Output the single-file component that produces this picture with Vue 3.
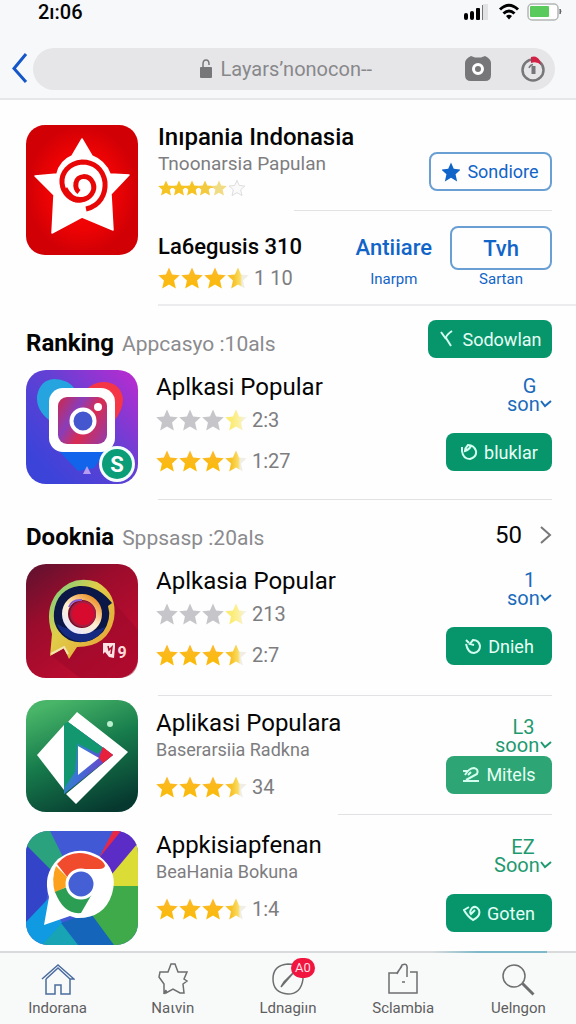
<template>
  <div class="page">
    <header class="top">
      <div class="status">
        <span class="time">2ı:06</span>
        <div class="status-icons">
          <svg width="28" height="20" viewBox="0 0 28 20">
            <rect x="1" y="11" width="4" height="7" rx="2" />
            <rect x="7" y="9" width="4" height="9" rx="2" />
            <rect x="13" y="6" width="4" height="12" rx="1" />
            <rect x="19" y="3" width="1" height="15" fill="#777" />
            <rect x="20" y="2" width="5" height="16" fill="#e2e3e5" />
          </svg>
          <svg width="22" height="18" viewBox="0 0 22 18" fill="none" stroke="#000" stroke-width="3">
            <path d="M2 6.500Q11 -2 20 6.500" />
            <path d="M5.500 10.500Q11 5.500 16.500 10.500" />
            <path d="M11 16.500l-3-3.500q3-2.500 6 0z" fill="#000" stroke="none" />
          </svg>
          <svg width="35" height="18" viewBox="0 0 35 18">
            <rect x="1" y="1" width="30" height="16" rx="4" fill="#fff" stroke="#b3b7b5" stroke-width="1.500" />
            <rect x="3" y="3" width="19" height="11" rx="1" fill="#5aca5c" />
            <path d="M33 6q2 2 0 5z" fill="#666" stroke="#666" />
          </svg>
        </div>
      </div>
      <div class="address">
        <a class="back" href="#" aria-label="Back">
          <svg width="16" height="32" viewBox="0 0 16 32" fill="none" stroke="#1557c9" stroke-width="3">
            <path d="M14 1L2 15.500L14 29" />
          </svg>
        </a>
        <div class="pill">
          <label class="url">
            <svg width="14" height="20" viewBox="0 0 14 20">
              <path d="M4 9V5q0-4 3-4t3 4v1" fill="none" stroke="#77777a" stroke-width="1.500" />
              <rect x="1" y="8" width="12" height="11" rx="1" fill="#77777a" />
            </svg>
            <input v-model="url" type="text" aria-label="Address" />
          </label>
          <div class="pill-icons">
            <button aria-label="Camera">
              <svg width="28" height="26" viewBox="0 0 28 26">
                <path d="M7 0l4 1.500h6L21 0q6 3 6 7v12q0 6-6 6H7q-6 0-6-6V7q0-4 6-7z" fill="#77777a" />
                <circle cx="14" cy="13" r="4.500" fill="none" stroke="#fff" stroke-width="3" />
              </svg>
            </button>
            <button aria-label="Reload">
              <svg width="26" height="26" viewBox="0 0 26 26" fill="none">
                <circle cx="13" cy="14" r="10.500" stroke="#77777a" stroke-width="2.500" />
                <path d="M11 1q6-2 9 4l1 4q-4-4-10-2z" fill="#d32045" />
                <path d="M9 12q1-3 4-3.500" stroke="#77777a" stroke-width="1.500" />
                <path d="M13.500 10v8" stroke="#77777a" stroke-width="4" />
              </svg>
            </button>
          </div>
        </div>
      </div>
    </header>

    <main>
      <section class="hero">
        <svg class="hero-icon" viewBox="0 0 112 130">
          <defs>
            <radialGradient id="heroBg">
              <stop offset="0" stop-color="#f80808" />
              <stop offset="0.600" stop-color="#ee0304" />
              <stop offset="1" stop-color="#d00005" />
            </radialGradient>
          </defs>
          <rect width="112" height="130" rx="19" fill="url(#heroBg)" />
          <path
            d="M56 14L66 31Q79 36 84 49L103 50L85 69L87 105L56 92L26 108L28 70L9 51L31 49Q34 36 46 31Z"
            fill="#fff"
            stroke="#fff"
            stroke-width="1.500"
            stroke-linejoin="round"
          />
          <path
            d="M60 84C74 81 80 69 79 57C77 44 68 37 56 37C43 38 35 48 36 58C37 69 46 76 55 75C64 74 70 66 67 58C63 49 51 50 50 58Q49 64 53 67"
            fill="none"
            stroke="#e80707"
            stroke-width="5"
          />
          <path d="M38 66Q44 80 56 77Q66 75 69 64Q64 73 54 72Q46 72 41 62Z" fill="#e80707" />
        </svg>
        <div class="hero-body">
          <div class="hero-line first">
            <div>
              <h1>Inıpania Indonasia</h1>
              <p class="sub">Tnoonarsia Papulan</p>
              <svg class="mini" width="90" height="22" viewBox="0 0 90 22">
                <path d="M4 10H66" stroke="#f2c83c" stroke-width="2" />
                <use
                  v-for="(star, i) in miniStars"
                  :key="i"
                  href="#starShape"
                  :x="star.x"
                  y="3"
                  width="16"
                  height="16"
                  :fill="star.fill"
                  :stroke="star.stroke"
                />
              </svg>
            </div>
            <button class="outline save">
              <svg width="18" height="20" viewBox="1 1 20 20"><use href="#starShape" width="22" height="22" fill="#1265c8" /></svg>
              Sondiore
            </button>
          </div>
          <div class="hero-line second">
            <div>
              <h2>La6egusis 310</h2>
              <div class="rating">
                <svg v-for="n in 4" :key="n" class="star" viewBox="0 0 22 22">
                  <use href="#starShape" :fill="n < 4 ? 'url(#gold)' : 'url(#half)'" />
                </svg>
                <span>1 10</span>
              </div>
            </div>
            <div class="choice">
              <a href="#">Antiiare</a>
              <small>Inarpm</small>
            </div>
            <div class="choice">
              <button class="outline">Tvh</button>
              <small>Sartan</small>
            </div>
          </div>
        </div>
      </section>

      <template v-for="app in apps" :key="app.id">
        <div v-if="app.heading" class="section-head">
          <h2>
            {{ app.heading }} <span>{{ app.note }}</span>
          </h2>
          <button v-if="app.id === 'photo'" class="install">
            <svg width="18" height="20" viewBox="0 0 18 20"><path d="M3 3l5 7M14 2Q8 6 8 9l5 8" /></svg>
            Sodowlan
          </button>
          <a v-else class="more" href="#">
            50
            <svg width="12" height="20" viewBox="0 0 12 20" fill="none" stroke="#77777a" stroke-width="2">
              <path d="M1 2l9 8l-9 8" />
            </svg>
          </a>
        </div>

        <article class="app" :class="app.id">
          <svg v-if="app.id === 'photo'" class="icon" viewBox="0 0 112 114">
            <defs>
              <linearGradient id="photoBg" x1="0.100" y1="0.800" x2="1" y2="0">
                <stop offset="0" stop-color="#3c43d9" />
                <stop offset="0.500" stop-color="#6540d4" />
                <stop offset="1" stop-color="#bf2ad0" />
              </linearGradient>
              <linearGradient id="lens" x1="0" y1="0.200" x2="1" y2="0.800">
                <stop offset="0" stop-color="#c02c62" />
                <stop offset="0.300" stop-color="#893dba" />
                <stop offset="0.600" stop-color="#d92c50" />
                <stop offset="1" stop-color="#9c399f" />
              </linearGradient>
            </defs>
            <rect width="112" height="114" rx="20" fill="url(#photoBg)" />
            <path d="M23 50Q10 40 11 26Q14 10 28 9Q42 9 50 20L40 50Z" fill="#26a4df" />
            <path d="M60 20Q68 11 80 12Q95 14 97 29Q97 40 88 51L62 45Z" fill="#f43647" />
            <path d="M32 80L52 101L68 98L84 76Z" fill="#1264ea" />
            <path d="M57 104l4-8l4 8z" fill="#b69df0" />
            <rect x="23" y="18" width="66" height="64" rx="14" fill="#fff" />
            <rect x="32" y="27" width="49" height="47" rx="9" fill="url(#lens)" />
            <circle cx="57" cy="51" r="11.500" fill="#4557cf" stroke="#fff" stroke-width="4" />
            <circle cx="72" cy="37" r="4" fill="#fff" />
            <circle cx="91" cy="94" r="18" fill="#f4fffc" />
            <circle cx="91" cy="94" r="15" fill="#0b9d78" />
            <text x="91" y="102" text-anchor="middle" class="badge-letter">S</text>
          </svg>

          <svg v-else-if="app.id === 'chat'" class="icon" viewBox="0 0 112 114">
            <defs>
              <linearGradient id="chatBg" x1="0" y1="0" x2="0.700" y2="1">
                <stop offset="0" stop-color="#5d1230" />
                <stop offset="0.400" stop-color="#9b0c2c" />
                <stop offset="1" stop-color="#c30c30" />
              </linearGradient>
              <linearGradient id="bubble" x1="0" y1="0" x2="1" y2="1">
                <stop offset="0" stop-color="#65cf8c" />
                <stop offset="0.400" stop-color="#dfce49" />
                <stop offset="1" stop-color="#e99b31" />
              </linearGradient>
              <linearGradient id="ring" x1="0.200" y1="1" x2="0.900" y2="0">
                <stop offset="0" stop-color="#e7e7ff" />
                <stop offset="0.450" stop-color="#fff0d0" />
                <stop offset="1" stop-color="#ec8c20" />
              </linearGradient>
            </defs>
            <rect width="112" height="114" rx="20" fill="url(#chatBg)" />
            <path d="M85 35L112 66V94Q112 114 92 114H54L25 91Z" fill="#98072a" opacity="0.500" />
            <path d="M26 70Q18 46 31 29Q47 10 71 18Q92 30 88 55Q82 83 51 83L43 95L38 84L24 92Z" fill="url(#bubble)" />
            <path d="M28 48Q31 25 53 22Q72 21 86 39L82 42Q86 55 77 68Q62 83 43 76Q26 66 28 48Z" fill="#0b1746" />
            <path d="M31 60Q37 75 55 78Q72 77 79 63Q55 74 31 60Z" fill="#152b82" />
            <circle cx="56" cy="50" r="17" fill="#7c0d27" stroke="url(#ring)" stroke-width="6" />
            <circle cx="57" cy="50" r="12" fill="#d70b2e" stroke="#a41e43" stroke-width="2" />
            <path d="M43 43Q46 35 56 36" fill="none" stroke="#8a5cd2" stroke-width="2" />
            <path d="M25 90l13-7l4 7" fill="none" stroke="#f3e6b2" stroke-width="2" />
            <path d="M77 79h12v4l-1 11l-5-1l-4-5l-2 2z" fill="#ffe2e4" />
            <path d="M82 82l1 4l3-3l-1 7" fill="none" stroke="#a90c2d" stroke-width="1.500" />
            <text x="96" y="94" text-anchor="middle" class="tiny-letter">9</text>
          </svg>

          <svg v-else-if="app.id === 'play'" class="icon" viewBox="0 0 112 112">
            <defs>
              <linearGradient id="playBg" x1="0.300" y1="0" x2="0.700" y2="1">
                <stop offset="0" stop-color="#48b568" />
                <stop offset="0.450" stop-color="#177c4c" />
                <stop offset="1" stop-color="#06382f" />
              </linearGradient>
              <linearGradient id="playMark" x1="0.100" y1="0.300" x2="0.800" y2="0.700">
                <stop offset="0" stop-color="#16a579" />
                <stop offset="0.450" stop-color="#3d72d8" />
                <stop offset="1" stop-color="#713dc6" />
              </linearGradient>
            </defs>
            <rect width="112" height="112" rx="20" fill="url(#playBg)" />
            <path d="M11 55L38 25V90Z" fill="#fff" />
            <path d="M42 22L51 12L102 52L50 104L40 94L87 55Z" fill="#fff" />
            <path d="M38 24L42 22L87 55L38 94Z" fill="url(#playMark)" />
            <path d="M38 24L42 22L77 48L72 54L51 43L49 72L38 88Z" fill="#13976f" />
            <path d="M77 47L87 55L77 63L73 58Z" fill="#e7213c" />
            <path d="M52 46L73 58L52 75Z" fill="#fff" />
            <circle cx="84" cy="24" r="3" fill="#baf0cf" />
          </svg>

          <svg v-else class="icon" viewBox="0 0 112 114">
            <defs>
              <clipPath id="round"><rect width="112" height="114" rx="22" /></clipPath>
            </defs>
            <g clip-path="url(#round)">
              <rect width="112" height="114" fill="#4259d6" />
              <path d="M0 0H24L40 32L25 40L0 14Z" fill="#2ba27e" />
              <path d="M0 14L26 40L20 70L0 92Z" fill="#3444c9" />
              <path d="M0 91L22 68L38 95L16 114H0Z" fill="#0f9ae2" />
              <path d="M16 114L36 92L54 114Z" fill="#18a4b5" />
              <path d="M35 92L68 80L90 114H52Z" fill="#1566ba" />
              <path d="M66 84L85 54H112V114H88Z" fill="#3eaa4a" />
              <path d="M83 40L112 8V55H83Z" fill="#dbdc36" />
              <path d="M74 26L92 0H112V12L86 43Z" fill="#5c2dc6" />
              <path d="M73 27L87 0H95Z" fill="#e72845" />
            </g>
            <path d="M18 94L23 66Q16 44 32 28Q52 13 73 25Q93 40 86 63Q78 88 50 87L44 85Z" fill="#fff" />
            <path d="M31 33Q43 19 61 23Q78 28 79 35Q78 38 73 38H54Q44 40 42 47Z" fill="#f14b2e" />
            <path d="M30 35L41 46L40 56L29 62Q25 47 30 35Z" fill="#fba11e" />
            <path d="M29 61L41 56Q45 66 66 63L55 82Q38 84 29 61Z" fill="#2c9e54" />
            <circle cx="55" cy="53" r="14" fill="#4560d5" stroke="#fff" stroke-width="3" />
          </svg>

          <div class="body">
            <h3>{{ app.title }}</h3>
            <p v-if="app.sub" class="sub">{{ app.sub }}</p>
            <div v-for="rating in app.ratings" :key="rating.text" class="rating">
              <svg v-for="n in 4" :key="n" class="star" viewBox="0 0 22 22">
                <use href="#starShape" :fill="starFill(n, rating.grey)" />
              </svg>
              <span>{{ rating.text }}</span>
            </div>
          </div>

          <div class="side">
            <label class="rank">
              <span>{{ app.rank }}</span>
              <span class="pick">
                <select>
                  <option>{{ app.soon }}</option>
                </select>
                <svg width="12" height="10" viewBox="0 0 12 10" fill="none" stroke="currentColor" stroke-width="2">
                  <path d="M1 2l4 5l6-5" />
                </svg>
              </span>
            </label>
            <button class="install">
              <svg width="18" height="18" viewBox="0 0 18 18"><path :d="app.glyph" /></svg>
              {{ app.action }}
            </button>
          </div>
        </article>
      </template>
    </main>

    <nav class="tabs">
      <a v-for="tab in tabs" :key="tab.label" href="#">
        <span class="tab-icon">
          <svg width="34" height="34" viewBox="0 0 34 34" fill="none" :stroke="tab.color" stroke-width="1.500">
            <path v-for="d in tab.paths" :key="d" :d="d" />
          </svg>
          <span v-if="tab.badge" class="badge">{{ tab.badge }}</span>
        </span>
        {{ tab.label }}
      </a>
    </nav>

    <svg class="defs" width="0" height="0">
      <defs>
        <symbol id="starShape" viewBox="1 1 20 20">
          <path
            d="M11 1.500L13.800 7.800L20.800 8.500L15.600 13.200L17.200 20.500L11 16.800L4.800 20.500L6.400 13.200L1.200 8.500L8.200 7.800Z"
            stroke-linejoin="round"
          />
        </symbol>
        <linearGradient id="gold" x1="0" y1="0" x2="0" y2="1">
          <stop offset="0" stop-color="#fdb82b" />
          <stop offset="1" stop-color="#f9bb06" />
        </linearGradient>
        <linearGradient id="half">
          <stop offset="0.300" stop-color="#f8c32a" />
          <stop offset="0.600" stop-color="#f9dc63" />
          <stop offset="0.700" stop-color="#f0eee4" />
        </linearGradient>
        <linearGradient id="pale">
          <stop offset="0.300" stop-color="#fbec76" />
          <stop offset="0.600" stop-color="#fcf09a" />
          <stop offset="0.900" stop-color="#f4f2e2" />
        </linearGradient>
      </defs>
    </svg>
  </div>
</template>

<script setup>
import { ref } from "vue";

const url = ref("Layarsʼnonocon--");

const miniStars = [
  { x: 0, fill: "#f5c322" },
  { x: 13, fill: "#f5c322" },
  { x: 26, fill: "#f5c322" },
  { x: 39, fill: "#f3ca3e" },
  { x: 53, fill: "#f1dc83" },
  { x: 71, fill: "#fafafa", stroke: "#d8d4d6" },
];

const swirl = "M5 6L2 3M2 7Q4 16 10 16Q16 15 16 9Q15 3 9 3L6 7L10 8";

const apps = [
  {
    id: "photo",
    heading: "Ranking",
    note: "Appcasyo :10als",
    title: "Aplkasi Popular",
    ratings: [{ text: "2:3", grey: true }, { text: "1:27" }],
    rank: "G",
    soon: "son",
    action: "bluklar",
    glyph: "M2 4v4M2 8Q3 16 10 16Q17 14 16 8Q14 2 8 2Q5 5 5 8Q9 7 11 3",
  },
  {
    id: "chat",
    heading: "Dooknia",
    note: "Sppsasp :20als",
    title: "Aplkasia Popular",
    ratings: [{ text: "213", grey: true }, { text: "2:7" }],
    rank: "1",
    soon: "son",
    action: "Dnieh",
    glyph: swirl,
  },
  {
    id: "play",
    title: "Aplikasi Populara",
    sub: "Baserarsiia Radkna",
    ratings: [{ text: "34" }],
    rank: "L3",
    soon: "soon",
    action: "Mitels",
    glyph: "M1 5h5M3 9Q7 2 12 2Q17 3 15 8L4 14M6 9L9 6M1 15H17",
  },
  {
    id: "browser",
    title: "Appkisiapfenan",
    sub: "BeaHania Bokuna",
    ratings: [{ text: "1:4" }],
    rank: "EZ",
    soon: "Soon",
    action: "Goten",
    glyph: "M6 3L1 6Q4 12 10 16Q18 12 16 6Q13 1 9 4Q6 8 8 10L12 6",
  },
];

const tabs = [
  {
    label: "Indorana",
    color: "#4a6c9e",
    paths: ["M1 17L17 3L33 17H29V32H20V23H14V32H5V17", "M5 17L17 6L29 17"],
  },
  {
    label: "Naιvin",
    color: "#6e6e70",
    paths: ["M15 2H19L22 10H31L28 17L31 19L27 22L28 31H24L17 27L10 31V28L8 32V22L3 15L4 10L12 10Z"],
  },
  {
    label: "Ldnagiın",
    color: "#6e6e70",
    badge: "A0",
    paths: ["M17 2Q32 2 32 17Q30 32 17 32Q2 31 2 17Q2 3 17 2Z", "M10 25L24 9L13 20Z"],
  },
  {
    label: "Sclambia",
    color: "#6e6e70",
    paths: ["M11 11H3V31H31V10H24M11 12L16 3Q22 0 21 8V15M11 11L16 4M16 20h3"],
  },
  {
    label: "Uelngon",
    color: "#6e6e70",
    paths: ["M13 3A11 11 0 1 1 13 25A11 11 0 1 1 13 3", "M21 22L32 33M22 21L33 32"],
  },
];

const starFill = (n, grey) => {
  if (n === 4) return grey ? "url(#pale)" : "url(#half)";
  return grey ? "#c6c6ca" : "url(#gold)";
};
</script>

<style>
body {
  margin: 0;
  background: #fefefe;
}
</style>

<style scoped>
.page {
  display: flex;
  flex-direction: column;
  min-height: 100vh;
  color: #050505;
  font-family: Roboto, "Liberation Sans", sans-serif;
}

h1,
h2,
h3,
p {
  margin: 0;
}

h1,
.hero h2,
h3 {
  font-size: 24px;
  line-height: 28px;
  font-weight: 500;
}

.hero h2 {
  font-size: 22px;
}

h3 {
  font-weight: 400;
}

a {
  color: inherit;
  text-decoration: none;
}

button,
input,
select {
  margin: 0;
  padding: 0;
  border: 0;
  background: none;
  color: inherit;
  font: inherit;
}

svg {
  display: block;
  flex-shrink: 0;
}

.defs {
  position: absolute;
}

.top {
  box-sizing: border-box;
  height: 100px;
  background: #f7f8f9;
  border-bottom: 2px solid #e6e7e9;
}

.status {
  display: flex;
  justify-content: space-between;
  height: 24px;
  padding: 0 14px 0 38px;
  align-items: center;
}

.time {
  font-size: 20px;
  font-weight: 500;
}

.status-icons {
  display: flex;
  align-items: center;
  gap: 7px;
}

.address {
  display: flex;
  align-items: center;
  gap: 5px;
  padding: 24px 21px 0 12px;
}

.pill {
  display: grid;
  flex: 1;
  grid-template-columns: 1fr auto 1fr;
  align-items: center;
  height: 42px;
  padding-right: 9px;
  border-radius: 21px;
  background: #e6e6e9;
}

.url {
  display: flex;
  grid-column: 2;
  align-items: center;
  gap: 8px;
}

.url input {
  width: 160px;
  color: #88888b;
  font-size: 20px;
}

.pill-icons {
  display: flex;
  justify-content: flex-end;
  gap: 28px;
}

.hero {
  display: grid;
  grid-template-columns: 112px 1fr;
  gap: 20px;
  padding: 23px 0 0 26px;
}

.hero-icon {
  width: 112px;
  height: 130px;
  margin-top: 2px;
}

.hero-body {
  border-bottom: 2px solid #ececee;
}

.hero-line {
  display: flex;
  position: relative;
  padding-right: 24px;
}

.first {
  justify-content: space-between;
  align-items: flex-end;
  height: 68px;
  padding-bottom: 20px;
}

.first > div {
  align-self: flex-start;
}

.first::after,
.play::after {
  content: "";
  position: absolute;
  right: 24px;
  bottom: 0;
  width: 258px;
  height: 1px;
  background: #e2e2e5;
}

.second {
  gap: 18px;
  height: 78px;
  padding-top: 15px;
}

.second > div:first-child {
  flex: 1;
  padding-top: 7px;
}

.second .rating {
  padding-top: 1px;
}

.sub {
  color: #7d7d80;
  font-size: 18px;
  line-height: 26px;
}

.hero .sub {
  font-size: 19px;
}

.outline {
  display: flex;
  box-sizing: border-box;
  align-items: center;
  justify-content: center;
  border: 2px solid #6a9fd3;
  border-radius: 8px;
  color: #1265c8;
}

.save {
  gap: 7px;
  width: 123px;
  height: 39px;
  font-size: 18px;
}

.choice {
  display: flex;
  flex-direction: column;
  align-items: center;
  color: #1265c8;
  font-size: 22px;
  font-weight: 500;
}

.choice a {
  line-height: 44px;
}

.choice .outline {
  width: 102px;
  height: 44px;
}

.choice small {
  font-size: 15px;
  font-weight: 400;
  line-height: 18px;
}

.rating {
  display: flex;
  align-items: center;
  gap: 1px;
  height: 32px;
  color: #7d7d80;
  font-size: 20px;
}

.rating span {
  padding-left: 4px;
}

.star {
  width: 22px;
  height: 22px;
}

.section-head {
  display: flex;
  justify-content: space-between;
  align-items: flex-end;
  min-height: 38px;
  padding: 14px 24px 12px 26px;
}

.section-head h2 {
  font-size: 24px;
  font-weight: 700;
  line-height: 28px;
}

.section-head h2 span {
  margin-left: 2px;
  color: #8b8b8e;
  font-size: 21px;
  font-weight: 400;
}

.section-head .install {
  width: 124px;
}

.more {
  display: flex;
  align-items: center;
  gap: 18px;
  font-size: 24px;
  line-height: 34px;
}

.install {
  display: flex;
  align-items: center;
  justify-content: center;
  gap: 6px;
  width: 106px;
  height: 38px;
  border-radius: 8px;
  background: #07966c;
  color: #e6fff5;
  font-size: 18px;
}

.install svg {
  fill: none;
  stroke: #d2fff0;
  stroke-width: 2;
}

.app {
  display: grid;
  position: relative;
  grid-template-columns: 112px 1fr auto;
  gap: 18px;
  padding: 0 24px 16px 26px;
}

.chat {
  padding-bottom: 18px;
}

.photo::after,
.chat::after {
  content: "";
  position: absolute;
  right: 24px;
  bottom: 0;
  left: 158px;
  height: 1px;
  background: #e2e2e5;
}

.icon {
  width: 112px;
  height: 114px;
}

.photo h3,
.chat h3 {
  line-height: 34px;
}

.rating + .rating {
  margin-top: 9px;
}

.sub + .rating {
  margin-top: 8px;
}

.side {
  display: flex;
  flex-direction: column;
  align-items: flex-end;
  gap: 20px;
  padding-top: 8px;
}

.rank {
  display: flex;
  flex-direction: column;
  align-items: center;
  color: #1b6bbb;
  font-size: 20px;
  line-height: 17px;
}

.pick {
  display: flex;
  align-items: center;
}

select {
  height: 18px;
  appearance: none;
  line-height: 18px;
}

.play .rank,
.browser .rank {
  color: #1f9a70;
}

.play {
  align-items: center;
  padding-top: 4px;
  padding-bottom: 3px;
}

.play .icon {
  height: 112px;
}

.play .side {
  gap: 2px;
  padding: 0;
}

.play .install {
  background: #2da574;
}

.play::after {
  width: 214px;
}

.browser {
  padding-top: 16px;
  padding-bottom: 6px;
}

.tabs {
  display: grid;
  position: relative;
  grid-template-columns: repeat(5, 1fr);
  flex: 1;
  margin-top: auto;
  border-top: 2px solid #d9dadc;
  background: #f8f9f9;
}

.tabs::before {
  content: "";
  position: absolute;
  top: -2px;
  right: 5%;
  width: 20%;
  height: 2px;
  background: linear-gradient(90deg, #d9dadc, #7fb9c9 40%);
}

.tabs a {
  display: flex;
  flex-direction: column;
  align-items: center;
  padding-top: 9px;
  color: #5e5e60;
  font-size: 15px;
  line-height: 20px;
}

.tab-icon {
  position: relative;
  height: 36px;
}

.badge {
  position: absolute;
  top: -4px;
  left: 20px;
  width: 24px;
  border-radius: 10px;
  background: #f0163f;
  color: #ffdfe5;
  font-size: 13px;
  text-align: center;
}

.badge-letter {
  fill: #fff;
  font-size: 22px;
  font-weight: 700;
}

.tiny-letter {
  fill: #ffd9dc;
  font-size: 16px;
  font-weight: 700;
}
</style>
